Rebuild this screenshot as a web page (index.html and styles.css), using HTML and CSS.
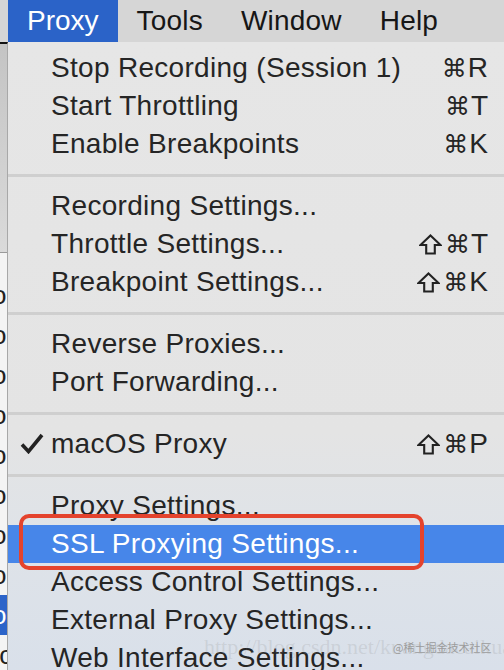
FILE: index.html
```html
<!DOCTYPE html>
<html>
<head>
<meta charset="utf-8">
<link rel="stylesheet" href="styles.css">
</head>
<body>
<div class="screen">
  <div class="menubar">
    <div class="mb-item active">Proxy</div>
    <div class="mb-item">Tools</div>
    <div class="mb-item">Window</div>
    <div class="mb-item">Help</div>
  </div>
  <div class="below">
    <div class="behind">
      <div class="behind-top"></div>
      <div class="behind-list">
        <div class="frag">o</div>
        <div class="frag">o</div>
        <div class="frag">o</div>
        <div class="frag">o</div>
        <div class="frag">o</div>
        <div class="frag">o</div>
        <div class="frag">o</div>
        <div class="frag">o</div>
        <div class="frag sel">o</div>
        <div class="frag">fc</div>
      </div>
    </div>
    <div class="menu">
      <div class="row"><span class="label">Stop Recording (Session 1)</span><span class="key"><span class="sym">⌘</span>R</span></div>
      <div class="row"><span class="label">Start Throttling</span><span class="key"><span class="sym">⌘</span>T</span></div>
      <div class="row"><span class="label">Enable Breakpoints</span><span class="key"><span class="sym">⌘</span>K</span></div>
      <div class="sep"></div>
      <div class="row"><span class="label">Recording Settings...</span></div>
      <div class="row"><span class="label">Throttle Settings...</span><span class="key"><svg class="shift" viewBox="0 0 24 22"><path d="M12 1.5 L22.5 11.5 L16.5 11.5 L16.5 20.5 L7.5 20.5 L7.5 11.5 L1.5 11.5 Z"/></svg><span class="sym">⌘</span>T</span></div>
      <div class="row"><span class="label">Breakpoint Settings...</span><span class="key"><svg class="shift" viewBox="0 0 24 22"><path d="M12 1.5 L22.5 11.5 L16.5 11.5 L16.5 20.5 L7.5 20.5 L7.5 11.5 L1.5 11.5 Z"/></svg><span class="sym">⌘</span>K</span></div>
      <div class="sep"></div>
      <div class="row"><span class="label">Reverse Proxies...</span></div>
      <div class="row"><span class="label">Port Forwarding...</span></div>
      <div class="sep"></div>
      <div class="row"><svg class="check" viewBox="0 0 24 21"><path d="M2 11.5 L8.5 18.5 L22 2"/></svg><span class="label">macOS Proxy</span><span class="key"><svg class="shift" viewBox="0 0 24 22"><path d="M12 1.5 L22.5 11.5 L16.5 11.5 L16.5 20.5 L7.5 20.5 L7.5 11.5 L1.5 11.5 Z"/></svg><span class="sym">⌘</span>P</span></div>
      <div class="sep"></div>
      <div class="row"><span class="label">Proxy Settings...</span></div>
      <div class="row hl"><span class="label">SSL Proxying Settings...</span><div class="redbox"></div></div>
      <div class="row"><span class="label">Access Control Settings...</span></div>
      <div class="row"><span class="label">External Proxy Settings...</span></div>
      <div class="row"><span class="label">Web Interface Settings...</span></div>
      <div class="wm1">http://blog.csdn.net/kuangdacaikuang</div>
      <div class="wm2">@稀土掘金技术社区</div>
    </div>
  </div>
</div>
</body>
</html>
```
FILE: styles.css
```css
html, body {
  margin: 0;
  padding: 0;
}
body {
  width: 504px;
  height: 670px;
  overflow: hidden;
  font-family: "Liberation Sans", Arial, "DejaVu Sans", sans-serif;
  background: #e5e5e5;
}
.screen {
  display: flex;
  flex-direction: column;
  width: 504px;
  height: 670px;
}
.menubar {
  height: 42px;
  flex: none;
  display: flex;
  padding-left: 8px;
  background: #d6d6d6;
  box-sizing: border-box;
}
.mb-item {
  padding: 0 19px;
  font-size: 28px;
  letter-spacing: 0.2px;
  line-height: 42px;
  color: #161616;
}
.mb-item.active {
  background: #2b63c8;
  color: #ffffff;
  letter-spacing: 0;
}
.below {
  flex: 1;
  display: flex;
  min-height: 0;
}
.behind {
  width: 8px;
  flex: none;
  display: flex;
  flex-direction: column;
  overflow: hidden;
  border-top: 2px solid #111;
  border-right: 1px solid #a8a8a8;
  box-sizing: border-box;
}
.behind-top {
  height: 208px;
  flex: none;
  background: linear-gradient(to bottom, #c4c4c4, #cfcfcf 50%, #dadada);
  border-bottom: 1px solid #9a9a9a;
}
.behind-list {
  flex: 1;
  background: #f4f4f4;
  padding-top: 22px;
}
.frag {
  height: 40px;
  line-height: 40px;
  font-size: 26px;
  margin-left: -8px;
  color: #222;
}
.frag.sel {
  background: #2c64c9;
  color: #fff;
}
.menu {
  flex: 1;
  position: relative;
  padding-top: 7px;
  background: linear-gradient(to bottom, #e6e6e6 0%, #e4e4e4 62%, #dfe3e8 78%, #d9e0ea 100%);
  overflow: hidden;
}
.row {
  position: relative;
  height: 38px;
  display: flex;
  align-items: center;
  padding-left: 43px;
  padding-right: 16px;
  font-size: 28px;
  letter-spacing: 0.3px;
  color: #252525;
}
.label {
  flex: 1;
  white-space: nowrap;
}
.check {
  position: absolute;
  left: 12px;
  top: 8px;
  width: 24px;
  height: 21px;
  fill: none;
  stroke: #222;
  stroke-width: 3.6;
  stroke-linecap: butt;
  stroke-linejoin: miter;
}
.key {
  display: flex;
  align-items: center;
  white-space: nowrap;
  letter-spacing: 0;
}
.shift {
  width: 23px;
  height: 21px;
  margin-right: 3px;
  fill: none;
  stroke: #222;
  stroke-width: 2.2;
  stroke-linejoin: miter;
}
.sym {
  font-family: "DejaVu Sans", sans-serif;
  font-size: 25px;
  margin-right: 1px;
}
.sep {
  height: 24px;
  display: flex;
  align-items: center;
}
.sep::before {
  content: "";
  display: block;
  width: 100%;
  height: 3px;
  background: #cfcfcf;
}
.row.hl {
  background: #4786e9;
  color: #ffffff;
}
.redbox {
  position: absolute;
  left: 11px;
  top: -11px;
  width: 405px;
  height: 56px;
  border: 4px solid #e4432d;
  border-radius: 10px;
  box-sizing: border-box;
}
.wm1 {
  position: absolute;
  left: 196px;
  bottom: 10px;
  font-family: "Liberation Serif", serif;
  font-size: 22px;
  color: rgba(140, 140, 140, 0.2);
  white-space: nowrap;
}
.wm2 {
  position: absolute;
  left: 385px;
  bottom: 15px;
  font-family: "Noto Sans CJK SC", sans-serif;
  font-size: 11px;
  color: #9c9c9c;
  white-space: nowrap;
}
```
